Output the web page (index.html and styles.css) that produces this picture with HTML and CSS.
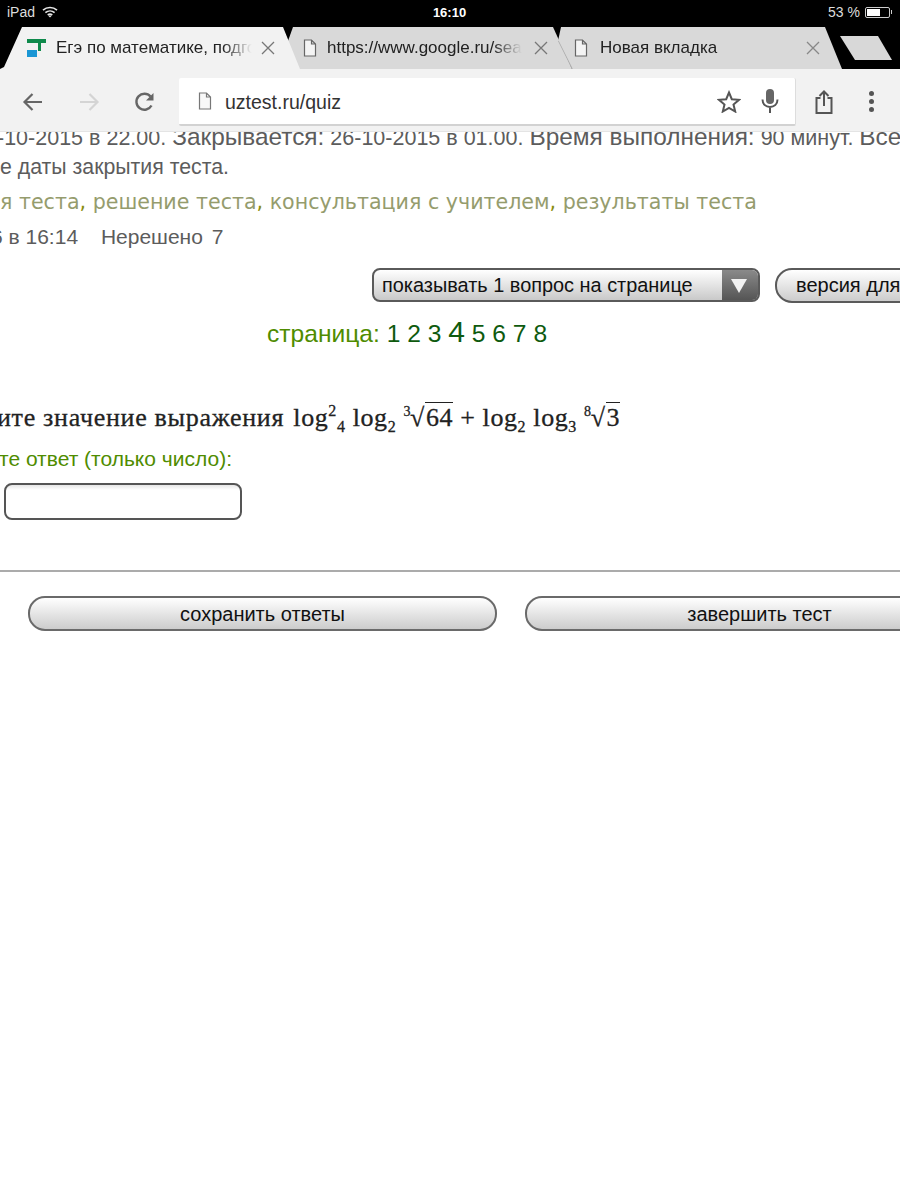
FILE: index.html
```html
<!DOCTYPE html>
<html lang="ru">
<head>
    <meta charset="utf-8">
    <title>uztest.ru/quiz</title>
    <link rel="stylesheet" href="styles.css">
</head>
<body>
<div class="status-bar">
    <div class="status-left">
        <span>iPad</span>
        <svg class="wifi" width="16" height="12" viewBox="0 0 16 12"><path d="M1 4.200C5 .6 11 .6 15 4.200M3.400 6.700c2.700-2.300 6.500-2.300 9.200 0M5.700 9c1.400-1 3.200-1 4.600 0" fill="none" stroke="#e8e8e8" stroke-width="1.600"/><path d="M8 11.600 6.500 10c.9-.6 2.100-.6 3 0z" fill="#e8e8e8"/></svg>
    </div>
    <div class="status-time">16:10</div>
    <div class="status-right">
        <span>53 %</span>
        <span class="battery"><span class="battery-level"></span></span>
        <span class="battery-nub"></span>
    </div>
</div>

<div class="tab-strip">
    <div class="tab tab-active">
        <svg class="favicon" width="20" height="20" viewBox="0 0 20 20"><rect x="0" y="1" width="19" height="4" fill="#0f8a4c"/><rect x="11" y="5" width="3" height="8" fill="#0f8a4c"/><rect x="0" y="12" width="10" height="7" fill="#1a96d4"/></svg>
        <span class="tab-title">Егэ по математике, подготовка</span>
        <svg class="tab-close" width="14" height="14" viewBox="0 0 14 14"><path d="M1 1l12 12M13 1 1 13" stroke="#777" stroke-width="1.300"/></svg>
    </div>
    <div class="tab tab-second">
        <svg class="page-icon" width="14" height="18" viewBox="0 0 14 18"><path d="M1.500 1h7l4 4v12h-11zM8.500 1v4h4" fill="#f4f4f4" stroke="#666" stroke-width="1.200"/></svg>
        <span class="tab-title">https://www.google.ru/search</span>
        <svg class="tab-close" width="14" height="14" viewBox="0 0 14 14"><path d="M1 1l12 12M13 1 1 13" stroke="#777" stroke-width="1.300"/></svg>
    </div>
    <div class="tab tab-third">
        <svg class="tab-edge" width="16" height="42" viewBox="0 0 16 42"><path d="M0 14 14 42" stroke="#aaa" stroke-width="1.500"/></svg>
        <svg class="page-icon" width="14" height="18" viewBox="0 0 14 18"><path d="M1.500 1h7l4 4v12h-11zM8.500 1v4h4" fill="#f4f4f4" stroke="#666" stroke-width="1.200"/></svg>
        <span class="tab-title">Новая вкладка</span>
        <svg class="tab-close" width="14" height="14" viewBox="0 0 14 14"><path d="M1 1l12 12M13 1 1 13" stroke="#888" stroke-width="1.300"/></svg>
    </div>
    <div class="new-tab"></div>
</div>

<div class="toolbar">
    <svg class="nav-icon back" width="22" height="20" viewBox="0 0 22 20"><path d="M20 10H3M10.500 2 2.500 10l8 8" fill="none" stroke="#666" stroke-width="2.200"/></svg>
    <svg class="nav-icon forward" width="22" height="20" viewBox="0 0 22 20"><path d="M2 10h17M11.500 2l8 8-8 8" fill="none" stroke="#d4d4d4" stroke-width="2.200"/></svg>
    <svg class="nav-icon reload" width="22" height="22" viewBox="0 0 22 22"><path d="M17.500 14.500A8 8 0 1 1 16.500 5.500" fill="none" stroke="#666" stroke-width="2.400"/><path d="M19.500 2v7.500H12z" fill="#666"/></svg>
    <div class="omnibox">
        <svg class="page-icon" width="14" height="18" viewBox="0 0 14 18"><path d="M1.500 1h7l4 4v12h-11zM8.500 1v4h4" fill="#f8f8f8" stroke="#777" stroke-width="1.200"/></svg>
        <span class="url">uztest.ru/quiz</span>
        <svg class="star" width="24" height="23" viewBox="0 0 24 23"><path d="M12 2.500l2.800 6.700 7.200.6-5.500 4.700 1.700 7-6.200-3.700-6.200 3.700 1.700-7L2 9.800l7.200-.6z" fill="none" stroke="#555" stroke-width="2"/></svg>
        <svg class="mic" width="18" height="24" viewBox="0 0 18 24"><rect x="5" y="0" width="8" height="15" rx="4" fill="#666"/><path d="M1.500 10.500c0 5 3.500 7.500 7.500 7.500s7.500-2.500 7.500-7.500M9 18v6" fill="none" stroke="#555" stroke-width="2"/></svg>
    </div>
    <svg class="share" width="18" height="24" viewBox="0 0 18 24"><path d="M5.500 8H1.500v15h15V8h-4M9 16V2M4.500 6 9 1.500 13.500 6" fill="none" stroke="#555" stroke-width="2"/></svg>
    <div class="menu-dots"><i></i><i></i><i></i></div>
</div>

<main class="page">
    <p class="info info-top">-10-2015 в 22.00. <span class="info-label">Закрывается:</span> 26-10-2015 в 01.00. <span class="info-label">Время выполнения:</span> 90 минут. <span class="info-label">Все</span></p>
    <p class="info info-second">е даты закрытия теста.</p>
    <p class="links">я теста<b>,</b> решение теста<b>,</b> консультация с учителем<b>,</b> результаты теста</p>
    <p class="info info-date">6 в 16:14 <span class="unsolved">Нерешено <span class="unsolved-count">7</span></span></p>

    <div class="controls">
        <div class="select-box">
            <span class="select-text">показывать 1 вопрос на странице</span>
            <span class="select-arrow"></span>
        </div>
        <div class="pill version">версия для печати</div>
    </div>

    <div class="pager">страница: <a>1</a> <a>2</a> <a>3</a> <a class="current">4</a> <a>5</a> <a>6</a> <a>7</a> <a>8</a></div>

    <div class="question">ите значение выражения <span class="math">log<sup>2</sup><sub>4</sub> log<sub>2</sub> <sup class="root-idx">3</sup>√<span class="radicand">64</span> + log<sub>2</sub> log<sub>3</sub> <sup class="root-idx">8</sup>√<span class="radicand">3</span></span></div>
    <div class="answer-label">те ответ (только число):</div>
    <div class="answer-input"></div>

    <hr class="divider">

    <div class="actions">
        <div class="pill save">сохранить ответы</div>
        <div class="pill finish">завершить тест</div>
    </div>
</main>
</body>
</html>
```

FILE: styles.css
```css
html, body {
    margin: 0;
    padding: 0;
}

body {
    width: 900px;
    height: 1200px;
    overflow: hidden;
    background: #fff;
    font-family: "Liberation Sans", Arial, sans-serif;
    color: #555;
}

/* status bar */
.status-bar {
    height: 27px;
    background: #000;
    color: #ddd;
    font-size: 14px;
    display: grid;
    grid-template-columns: 1fr auto 1fr;
    align-items: center;
    padding: 0 8px 3px 7px;
    box-sizing: border-box;
}

.status-left {
    display: flex;
    align-items: center;
    gap: 7px;
}

.status-time {
    color: #fff;
    font-size: 13px;
    font-weight: bold;
}

.status-right {
    display: flex;
    justify-content: flex-end;
    align-items: center;
    gap: 5px;
}

.battery {
    width: 25px;
    height: 11px;
    border: 1px solid #ccc;
    border-radius: 2px;
    padding: 1px;
    box-sizing: border-box;
    display: block;
}

.battery-level {
    display: block;
    width: 13px;
    height: 100%;
    background: #fff;
}

.battery-nub {
    width: 1px;
    height: 4px;
    margin-left: -4px;
    background: #ccc;
}

/* tabs */
.tab-strip {
    height: 42px;
    background: #000;
    display: flex;
    overflow: hidden;
}

.tab {
    height: 42px;
    display: flex;
    align-items: center;
    box-sizing: border-box;
    color: #222;
    font-size: 17px;
    flex: none;
}

.tab-title {
    overflow: hidden;
    white-space: nowrap;
    -webkit-mask-image: linear-gradient(to right, #000 85%, transparent);
    mask-image: linear-gradient(to right, #000 85%, transparent);
}

.tab-active {
    width: 300px;
    background: #f2f2f2;
    clip-path: polygon(0 100%, 0 42px, 4px 40px, 22px 0, 283px 0, 300px 42px);
    padding-left: 27px;
    position: relative;
    z-index: 2;
}

.tab-active .tab-title {
    width: 196px;
    margin-left: 9px;
}

.tab-active .tab-close {
    margin-left: 9px;
}

.tab-second {
    width: 292px;
    margin-left: -20px;
    background: #d9d9d9;
    clip-path: polygon(13px 0, 273px 0, 292px 42px, 0 42px, 8px 14px);
    padding-left: 23px;
}

.tab-second .tab-title {
    width: 195px;
    margin-left: 10px;
}

.tab-second .tab-close {
    margin-left: 12px;
}

.tab-third {
    width: 284px;
    margin-left: -14px;
    background: #d9d9d9;
    clip-path: polygon(3px 0, 267px 0, 284px 42px, 14px 42px, 0 14px);
    padding-left: 16px;
    position: relative;
    z-index: 1;
}

.tab-edge {
    position: absolute;
    left: 0;
    top: 0;
}

.tab-third .tab-title {
    width: 200px;
    margin-left: 12px;
}

.tab-third .tab-close {
    margin-left: 6px;
}

.new-tab {
    width: 52px;
    height: 24px;
    margin: 9px 0 0 -2px;
    background: #d8d8d8;
    clip-path: polygon(0 0, 38px 0, 52px 24px, 15px 24px);
    flex: none;
}

/* toolbar */
.toolbar {
    height: 63px;
    background: #f2f2f2;
    display: flex;
    align-items: center;
    box-sizing: border-box;
    padding: 8px 0 5px;
    border-bottom: 1px solid #e4e4e4;
    position: relative;
    z-index: 3;
}

.back {
    margin-left: 22px;
}

.forward {
    margin-left: 34px;
}

.reload {
    margin-left: 34px;
}

.omnibox {
    width: 617px;
    height: 48px;
    margin: 1px 0 0 23px;
    align-self: flex-start;
    background: #fff;
    border-bottom: 2px solid #d2d2d2;
    border-right: 1px solid #ddd;
    box-sizing: border-box;
    display: flex;
    align-items: center;
    padding-left: 19px;
    flex: none;
    border-radius: 2px;
}

.url {
    margin-left: 13px;
    padding-top: 2px;
    font-size: 19.500px;
    color: #333;
    flex: 1;
}

.star {
    margin-right: 20px;
}

.mic {
    margin-right: 16px;
}

.share {
    margin-left: 19px;
}

.menu-dots {
    margin-left: 36px;
    display: flex;
    flex-direction: column;
    gap: 3px;
}

.menu-dots i {
    width: 5px;
    height: 5px;
    border-radius: 50%;
    background: #555;
    display: block;
}

/* page content */
.page {
    overflow: hidden;
    height: 1068px;
    white-space: nowrap;
}

.page p {
    margin: 0;
}

.info {
    font-size: 21px;
    line-height: 28px;
    color: #5c5c5c;
}

.info-top {
    font-size: 21.500px;
    margin-top: -9px !important;
    margin-left: -3px !important;
}

.info-label {
    font-size: 24.400px;
}

.info-second {
    font-size: 21.300px;
    margin-top: 1px !important;
}

.links {
    font-family: "DejaVu Sans", Verdana, sans-serif;
    font-size: 20.600px;
    line-height: 28px;
    color: #959c6d;
    margin-top: 7px !important;
}

.links b {
    font-weight: normal;
    color: #8a8f10;
}

.info-date {
    margin-top: 7px !important;
    margin-left: -9px !important;
}

.unsolved {
    margin-left: 17px;
}

.unsolved-count {
    margin-left: 3px;
}

.controls {
    display: flex;
    margin: 17px 0 0 372px;
    gap: 15px;
    width: 700px;
}

.select-box {
    width: 388px;
    height: 34px;
    box-sizing: border-box;
    border: 2px solid #5a5a5a;
    border-radius: 8px;
    background: linear-gradient(#fff, #c9c9c9);
    display: flex;
    align-items: center;
    justify-content: space-between;
    overflow: hidden;
    flex: none;
}

.select-text {
    margin-left: 8px;
    font-size: 19.900px;
    color: #111;
}

.select-arrow {
    width: 36px;
    height: 100%;
    background: linear-gradient(#8a8a8a, #555);
    position: relative;
}

.select-arrow::after {
    content: "";
    position: absolute;
    left: 9px;
    top: 9px;
    border-left: 8px solid transparent;
    border-right: 8px solid transparent;
    border-top: 14px solid #f2f2f2;
}

.pill {
    height: 35px;
    box-sizing: border-box;
    border: 2px solid #5a5a5a;
    border-radius: 17px;
    background: linear-gradient(#fff, #ccc);
    font-size: 20px;
    color: #111;
    display: flex;
    align-items: center;
    justify-content: center;
    flex: none;
}

.version {
    width: 220px;
    justify-content: flex-start;
    padding-left: 19px;
}

.pager {
    margin: 9px 0 0 267px;
    height: 40px;
    line-height: 40px;
    font-size: 24.600px;
    color: #4f8c00;
}

.pager a {
    color: #0e5a0e;
}

.pager a.current {
    font-size: 30px;
}

.question {
    margin: 44px 0 0 -3px;
    font-family: "Liberation Serif", "Times New Roman", serif;
    font-size: 26px;
    letter-spacing: 0.7px;
    height: 50px;
    line-height: 44px;
    color: #222;
    -webkit-text-stroke: 0.3px #222;
}

.math {
    margin-left: 2px;
    letter-spacing: 0.6px;
}

.math sup, .math sub {
    font-size: 16px;
    line-height: 0;
}

.math sup.root-idx {
    font-size: 14px;
    margin-right: -1px;
}

.radicand {
    border-top: 1px solid #222;
    padding-left: 1px;
}

.answer-label {
    margin: 0 0 0 -1px;
    font-size: 21px;
    line-height: 26px;
    color: #4f8c00;
}

.answer-input {
    width: 238px;
    height: 37px;
    margin: 11px 0 0 4px;
    box-sizing: border-box;
    border: 2px solid #555;
    border-radius: 8px;
    background: linear-gradient(#e6e6e6, #fff 5px);
}

.divider {
    margin: 50px 0 0;
    border: 0;
    height: 2px;
    background: #ababab;
}

.actions {
    display: flex;
    margin: 24px 0 0 28px;
    gap: 28px;
    width: 1000px;
}

.save,
.finish {
    width: 469px;
    padding-top: 2px;
    border-color: #6a6a6a;
}
```
